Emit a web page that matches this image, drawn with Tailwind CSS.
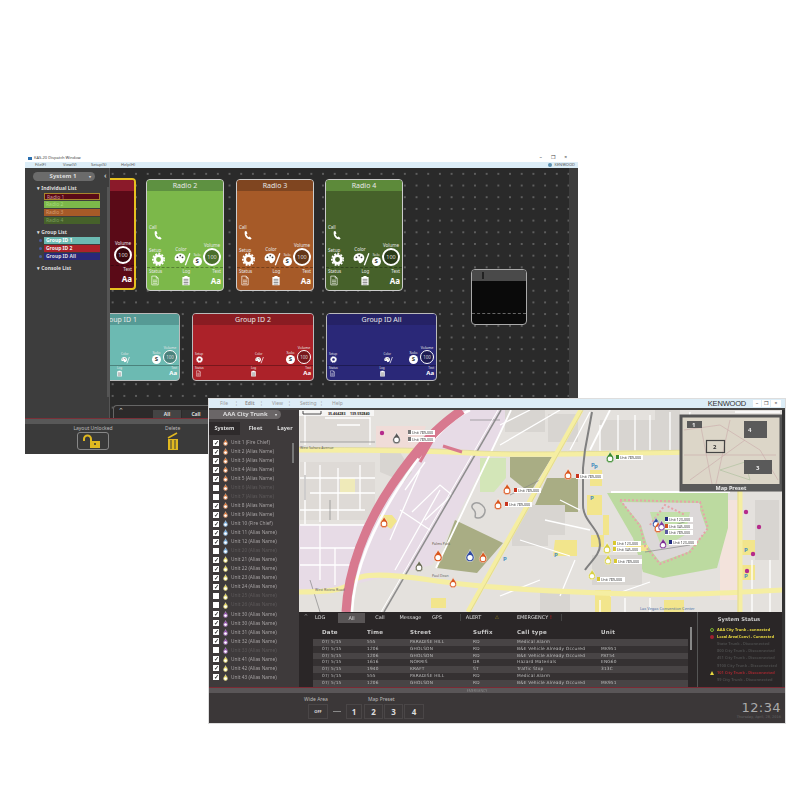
<!DOCTYPE html>
<html lang="en">
<head>
    <meta charset="UTF-8">
    <meta name="viewport" content="width=device-width, initial-scale=1.0">
    <title>Kenwood Dispatch</title>
    <script src="https://cdn.jsdelivr.net/npm/@tailwindcss/browser@4"></script>
</head>
<body class="bg-white">
    <!-- shared icons -->
    <svg class="hidden">
        <symbol id="phone" viewBox="0 0 24 24"><path fill="currentColor" d="M5 2 9 1l3 7-3 2c1 3 3 6 6 8l3-2 5 5-3 3C10 24 2 13 5 2z"/></symbol>
        <symbol id="gear" viewBox="0 0 24 24"><circle cx="12" cy="12" r="7" fill="none" stroke="currentColor" stroke-width="5"/><circle cx="12" cy="12" r="10.5" fill="none" stroke="currentColor" stroke-width="3" stroke-dasharray="3.5 2.5"/></symbol>
        <symbol id="palette" viewBox="0 0 30 24"><path fill="currentColor" d="M11 2C5 2 1 6 1 11c0 4 3 5 5 4 2-1 4 0 4 2 0 2 2 3 4 2 4-2 6-5 6-9 0-5-4-8-9-8z"/><circle cx="6" cy="9" r="1.6" fill="#444"/><circle cx="11" cy="6" r="1.6" fill="#444"/><circle cx="15" cy="9" r="1.6" fill="#444"/><path stroke="currentColor" stroke-width="2.4" d="M28 2 20 23"/></symbol>
        <symbol id="doc" viewBox="0 0 20 24"><path fill="none" stroke="currentColor" stroke-width="1.8" d="M2 1h11l5 5v17H2zM13 1v5h5M5 11h10M5 15h10M5 19h10"/></symbol>
        <symbol id="clip" viewBox="0 0 20 24"><path fill="currentColor" d="M1 3h5V1h8v2h5v21H1z"/><path stroke="#555" stroke-width="1.6" d="M4 9h12M4 13h12M4 17h12M4 21h12"/></symbol>
        <symbol id="drop" viewBox="0 0 12 16"><path fill="currentColor" stroke="#fff" stroke-width=".6" d="M6 .5C7 4 11 6 11 10.500a5 5 0 0 1-10 0C1 7 5 5 6 .5z"/><circle cx="6" cy="10.500" r="3.200" fill="#fff"/></symbol>
    </svg>

    <div class="relative w-[800px] h-[800px] overflow-hidden blur-[0.55px] font-['Noto_Sans',sans-serif]">

        <!-- back window: layout editor -->
        <div class="absolute left-[25px] top-[154px] w-[553px] h-[300px] flex flex-col bg-[#3a3a3a]">
            <div class="h-2 bg-white flex items-center justify-between pl-[3px] pr-[11px] text-[4px] text-[#444]">
                <span class="flex items-center gap-[2px]"><span class="w-[4px] h-[3px] bg-[#2a6fb0]"></span>KAS-20 Dispatch Window</span>
                <span class="flex gap-[9px] text-[5px]"><span>–</span><span>❐</span><span>×</span></span>
            </div>
            <div class="h-[6px] bg-[#dcedf7] flex items-center justify-between pl-[10px] pr-[3px] text-[4px] text-[#555]">
                <span class="flex"><span class="w-[28px]">File(F)</span><span class="w-[28px]">View(V)</span><span class="w-[30px]">Setup(S)</span><span>Help(H)</span></span>
                <span class="flex items-center gap-[2px]"><span class="w-[4px] h-[4px] rounded-full bg-[#5b8fb0]"></span>KENWOOD</span>
            </div>
            <div class="relative h-[250px] flex">
                <div class="relative flex-1 overflow-hidden bg-[#2a2a2a] bg-[radial-gradient(circle,#5e5e5e_0.8px,transparent_1.1px)] bg-[length:11.7px_11.7px]" id="canvas">
                    <div class="absolute left-[88px] top-[237px] w-[440px] h-[13px] border-t border-l border-[#666] rounded-tl-[4px] bg-[#2c2a2a] flex items-end pl-[39px]">
                        <span class="absolute left-[4px] top-[1px] text-[7px] leading-[7px] text-[#ccc]">⌃</span>
                        <span class="w-[28px] h-[8px] bg-[#444] text-[5px] leading-[8px] text-center text-[#ddd] font-bold">All</span>
                        <span class="ml-[1px] w-[28px] h-[8px] bg-[#333] text-[5px] leading-[8px] text-center text-[#ddd] font-bold">Call</span>
                    </div>
                </div>
                <div class="w-[9px] bg-[#3d3d3d]"></div>

                <!-- left list, lies over the canvas -->
                <div class="absolute left-0 top-0 bottom-0 w-[85px] bg-[#3d3d3d] border-r border-[#555] text-[5px] font-bold text-[#ddd]">
                    <div class="flex items-center mt-[4px] ml-2 w-[62px] h-[9px] rounded-full bg-[#6b6b6b] px-[4px] justify-between text-[6px]">
                        <span class="flex-1 text-center">System 1</span><span class="text-[4px]">▾</span>
                    </div>
                    <span class="absolute left-[79px] top-[4px] text-[7px] leading-[8px] text-[#ccc]">‹</span>
                    <div class="absolute left-[82px] top-[19px] w-[3px] h-[210px] bg-[#555]"></div>
                    <div class="ml-[12px] mt-[4px] leading-[7px]">▾ Individual List</div>
                    <div class="ml-[19px] mt-[1px] w-[56px] flex flex-col gap-[1px] font-normal">
                        <div class="h-[7px] pl-[2px] leading-[6px] bg-[#5a0a17] border border-[#a8862c] text-[#c99]">Radio 1</div>
                        <div class="h-[7px] pl-[2px] leading-[7px] bg-[#7cb84a] text-[#a5d97a]">Radio 2</div>
                        <div class="h-[7px] pl-[2px] leading-[7px] bg-[#a65a28] text-[#d49a70]">Radio 3</div>
                        <div class="h-[7px] pl-[2px] leading-[7px] bg-[#46612a] text-[#7b9a5c]">Radio 4</div>
                    </div>
                    <div class="ml-[12px] mt-[5px] leading-[7px]">▾ Group List</div>
                    <div class="ml-[19px] mt-[1px] w-[56px] flex flex-col gap-[1px]">
                        <div class="relative h-[7px] pl-[2px] leading-[7px] bg-[#6cbab2] text-white">Group ID 1<span class="absolute -left-[5px] top-[2px] w-[3px] h-[3px] rounded-full bg-[#4a5a9a]"></span></div>
                        <div class="relative h-[7px] pl-[2px] leading-[7px] bg-[#ac2229] text-[#eee]">Group ID 2<span class="absolute -left-[5px] top-[2px] w-[3px] h-[3px] rounded-full bg-[#4a5a9a]"></span></div>
                        <div class="relative h-[7px] pl-[2px] leading-[7px] bg-[#2a2878] text-[#ddd]">Group ID All<span class="absolute -left-[5px] top-[2px] w-[3px] h-[3px] rounded-full bg-[#4a5a9a]"></span></div>
                    </div>
                    <div class="ml-[12px] mt-[5px] leading-[7px]">▾ Console List</div>
                </div>
            </div>
            <div class="h-[6px] bg-[#585858] border-t border-[#7a3038]"></div>
            <div class="h-[30px] bg-[#3a3a3a] relative text-[5px] text-[#bbb] flex">
                <div class="ml-[51px] w-[34px] flex flex-col items-center pt-[1px]">
                    <span class="leading-[6px] whitespace-nowrap">Layout Unlocked</span>
                    <div class="mt-[1px] w-[32px] h-[18px] rounded-[3px] border border-[#888] flex items-center justify-center">
                        <svg width="22" height="14" viewBox="0 0 22 14"><path fill="none" stroke="#e0b820" stroke-width="2" d="M2 7V5a3.500 3.500 0 0 1 7 0v2"/><path fill="#e0b820" d="M8 7h10v7H8z"/><circle cx="13" cy="10" r="1" fill="#333"/></svg>
                    </div>
                </div>
                <div class="ml-[55px] flex flex-col items-center pt-[1px]">
                    <span class="leading-[6px]">Delete</span>
                    <svg class="mt-[1px]" width="12" height="18" viewBox="0 0 12 18"><path stroke="#e0b820" stroke-width="1.500" d="M1 6 10 1"/><path fill="#e0b820" d="M1 7h10v11H1z"/><path stroke="#3a3a3a" d="M4 8v9M8 8v9"/></svg>
                </div>
            </div>
        </div>

        <!-- front window: map dispatch -->
        <div class="absolute left-[209px] top-[399px] w-[576px] h-[324px] flex flex-col bg-[#2a2627] text-[#bbb] shadow-[0_0_0_1px_#ddd]">
            <div class="h-[11px] bg-[#dcedf7] border-b-2 border-[#444] flex items-center text-[5px] text-[#999]">
                <span class="ml-[11px] w-[15px]">File</span><span class="w-[10px]">¦</span><span class="w-[15px] font-bold">Edit</span><span class="w-[12px]">¦</span><span class="w-[16px]">View</span><span class="w-[12px]">¦</span><span class="w-[20px]">Setting</span><span class="w-[12px]">¦</span><span>Help</span>
                <span class="ml-auto mr-[7px] text-[7.500px] tracking-[-0.2px] text-[#333] font-['Liberation_Sans',sans-serif]">KENWOOD</span>
                <span class="flex gap-[1px] mr-[4px] text-[5px] text-[#444]"><span class="w-[8px] text-center bg-white">–</span><span class="w-[8px] text-center bg-white">❐</span><span class="w-[10px] text-center bg-white">×</span></span>
            </div>
            <div class="flex h-[202px]">
                <div class="w-[90px] shrink-0 bg-[#3e3a3b]"></div>
                <svg class="block shrink-0" width="483" height="202" viewBox="299 410 483 202" font-family="Noto Sans, sans-serif">
                    <rect x="299" y="410" width="483" height="202" fill="#e4e1dd"/>
                    <!-- land use -->
                    <path fill="#e7dbe6" d="M299 525H368L350 590 299 592zM462 410H512L432 565 352 585 360 530 392 485z"/>
                    <path fill="#f0dcd8" d="M376 426h50l-8 22h-42z"/>
                    <path fill="#f3e3dc" d="M720 500h18v100h-18z"/>
                    <path fill="#d3e6b8" d="M480 458h26v20l-12 14h-14z"/>
                    <path fill="#a9ad84" d="M437 568 455 520 503 543 477 573zM510 457H552L530 493 510 477zM547 478H578V512H532z"/>
                    <path fill="#bcdaa0" d="M607 493H728V528L717 568 663 578 643 572 633 538z"/>
                    <path fill="#dcd8d8" d="M622 502 700 503 700 510 707 530 688 552 660 562 647 545 641 525z"/>
                    <path fill="#c3dfaa" d="M650 512 690 512 685 535 662 548 655 530z"/>
                    <path fill="#f2e58c" d="M380 515h12l5 6-6 8-12-8zM555 540h22v16h-24zM590 470h12v16h-12zM587 495h15v20h-15zM591 535h13v12h-13zM603 515h6v20h-6zM626 545h22v6h-22zM431 598h15v10h-15zM595 590h16v22h-16zM664 600h20v12h-20zM742 540h13v15h-13zM742 565h13v15h-13z"/>
                    <path fill="#d8d5d1" d="M380 452h20l12 20-8 10-24-10zM525 505h40v30h-55zM592 555h50v30h-50zM655 410h25v40h-25zM548 414h30v28h-30zM505 410h40v22h-40zM512 530h36v16h-36zM540 590h30v22h-30zM755 500h24v60h-24zM600 420h60v30h-60z"/>
                    <path fill="#dedad6" d="M300 462h75v58h-75zM300 412h70v30h-70z"/>
                    <path fill="#efeab9" d="M340 478h15v16h-15z"/>
                    <!-- minor streets -->
                    <g fill="none" stroke="#fff" stroke-width="1.300">
                        <path d="M305 412V445M325 418H370V445M337 425H360M305 462V524M320 465V522M338 468V520M360 465V510M300 478H375M310 493H375M300 510H365M300 525H372M300 548H360M320 525V580M335 548V585M300 565H355"/>
                        <path d="M405 490 425 462M412 512 440 485 452 495 425 520M400 510 430 530M390 540 420 470M395 570 440 490"/>
                        <path d="M500 425 530 410M500 445 560 410M590 412 570 450M600 425V452M618 415V452M635 415V452M650 415V452M670 412V450M690 412 685 450M545 520 590 530M560 500 580 510M520 540 570 556M500 596 540 580M560 596 575 560M610 596 650 582M735 412H780M735 440H780M752 560V612M770 560V612M600 600V612M625 598V612M650 598V612"/>
                        <path stroke-width="1.800" d="M611 492H730M511 410 436 568M610 410 590 450"/>
                    </g>
                    <path fill="none" stroke="#e6a3a8" stroke-width="2" stroke-dasharray="2 2" d="M620 500 700 502 708 528 690 552 660 564 645 546 640 526zM650 525 665 505 685 515"/>
                    <path fill="none" stroke="#888" stroke-width=".7" d="M300 442H375M305 475V500M330 500V520M395 480 420 445M470 420 500 420M540 480 510 495M310 580 320 612M690 520 660 530M645 552 690 545"/>
                    <!-- rail, highway, main roads -->
                    <path fill="none" stroke="#8d8d8d" stroke-width="1.500" d="M501 410 384 612"/>
                    <path fill="none" stroke="#fff" stroke-width="1" d="M498 410 381 612"/>
                    <path fill="none" stroke="#f5eea2" stroke-width="5" d="M299 450C360 450 420 450 470 453S600 453 782 451"/>
                    <path fill="none" stroke="#dcd58a" stroke-width=".6" d="M299 447.500C360 447.500 420 447.500 470 450.500S600 451 782 449"/>
                    <path fill="none" stroke="#f5eea2" stroke-width="5" d="M299 592C330 592 345 590 352 582 360 572 390 574 430 580S520 590 600 593 700 594 782 590M581 410 468 612M740 490V612"/>
                    <path fill="none" stroke="#d6cf80" stroke-width=".6" d="M583 410 470 612M738 490V612"/>
                    <path fill="none" stroke="#fff" stroke-width="2.500" d="M352 612C354 570 372 530 397 490S447 420 470 410"/>
                    <path fill="none" stroke="#d8798f" stroke-width="9" d="M346 612C348 570 365 525 392 485S440 425 462 410"/>
                    <path fill="none" stroke="#d8798f" stroke-width="3" d="M443 446 462 452M418 458 435 436 420 462"/>
                    <path fill="none" stroke="#808080" stroke-width="2" d="M592 412 585 450 583 468V505C583 522 600 528 600 545 600 555 590 562 585 570"/>
                    <path fill="none" stroke="#a0a0a0" stroke-width="1.500" d="M474 510C468 505 476 500 482 505 488 510 484 518 478 518 472 518 478 514 474 510z"/>
                    <!-- parking and pois -->
                    <g fill="#4a90c0" font-size="6" font-weight="700"><text x="591" y="467">P</text><text x="590" y="500">P</text><text x="503" y="561">P</text><text x="554" y="557">P</text><text x="594" y="469">P</text><text x="744" y="552">P</text><text x="744" y="578">P</text></g>
                    <g fill="#b52a8c"><circle cx="382" cy="433" r="2.200"/><circle cx="746" cy="512" r="2.200"/><circle cx="759" cy="527" r="2.200"/><circle cx="753" cy="554" r="2.200"/><circle cx="747" cy="571" r="2.200"/></g>
                    <!-- street names -->
                    <g fill="#666" font-size="3.500">
                        <text x="300" y="449">West Sahara Avenue</text><text x="315" y="591">West Riviera Road</text><text x="432" y="577">Paul Dean</text><text x="432" y="545" fill="#5f6048">Palms Park</text><text x="640" y="610" fill="#4a6fa8" font-size="4">Las Vegas Convention Center</text>
                    </g>
                    <!-- scale and coordinates -->
                    <rect x="299" y="410" width="75" height="6" fill="#fff" fill-opacity=".7"/>
                    <path fill="none" stroke="#222" stroke-width=".8" d="M303 411v3h18v-3"/>
                    <text x="328" y="415" font-size="3.600" font-weight="700" fill="#222">35.464283</text><text x="350" y="415" font-size="3.600" font-weight="700" fill="#222">139.592840</text>
                    <!-- units -->
                    <g>
                        <use href="#drop" x="379" y="516" width="10" height="12" color="#d9561e"/>
                        <use href="#drop" x="433" y="549" width="10" height="13" color="#d9561e"/>
                        <use href="#drop" x="465" y="549" width="10" height="13" color="#2f4aa0"/>
                        <use href="#drop" x="478" y="551" width="10" height="12" color="#d9561e"/>
                        <use href="#drop" x="414" y="560" width="10" height="12" color="#6b6b55"/>
                        <use href="#drop" x="448" y="577" width="10" height="11" color="#d9561e"/>
                        <use href="#drop" x="502" y="483" width="10" height="12" color="#d9561e"/>
                        <use href="#drop" x="493" y="498" width="10" height="12" color="#d9561e"/>
                        <use href="#drop" x="563" y="468" width="10" height="12" color="#d9561e"/>
                        <use href="#drop" x="605" y="451" width="10" height="12" color="#3c8a2e"/>
                        <use href="#drop" x="651" y="517" width="10" height="11" color="#2f4aa0"/>
                        <use href="#drop" x="653" y="521" width="10" height="12" color="#d9561e"/>
                        <use href="#drop" x="657" y="520" width="9" height="11" color="#7a3fa0"/>
                        <use href="#drop" x="658" y="538" width="10" height="11" color="#7a2a90"/>
                        <use href="#drop" x="602" y="542" width="10" height="12" color="#d8d040"/>
                        <use href="#drop" x="603" y="554" width="10" height="11" color="#d8d040"/>
                        <use href="#drop" x="587" y="569" width="10" height="11" color="#d8d040"/>
                        <use href="#drop" x="392" y="432" width="9" height="12" color="#555"/>
                    </g>
                    <g font-size="3.500" fill="#333">
                        <rect x="408" y="430" width="27" height="5" fill="#fff"/><rect x="408" y="437" width="27" height="5" fill="#fff"/><rect x="408" y="430" width="3" height="4" fill="#777"/><rect x="408" y="437" width="3" height="4" fill="#777"/><text x="412" y="434">Unit 789-000</text><text x="412" y="441">Unit 789-000</text>
                        <rect x="514" y="488" width="27" height="5" fill="#fff"/><rect x="514" y="488" width="3" height="4" fill="#c8351e"/><text x="518" y="492">Unit 789-000</text>
                        <rect x="505" y="502" width="27" height="5" fill="#fff"/><rect x="505" y="502" width="3" height="4" fill="#c8351e"/><text x="509" y="506">Unit 789-000</text>
                        <rect x="576" y="474" width="27" height="5" fill="#fff"/><rect x="576" y="474" width="3" height="4" fill="#c8351e"/><text x="580" y="478">Unit 789-000</text>
                        <rect x="616" y="455" width="27" height="5" fill="#fff"/><rect x="616" y="455" width="3" height="4" fill="#3c8a2e"/><text x="620" y="459">Unit 789-000</text>
                        <rect x="665" y="517" width="28" height="5" fill="#fff"/><rect x="665" y="517" width="3" height="4" fill="#1f2a80"/><text x="669" y="521">Unit 123-000</text>
                        <rect x="665" y="524" width="28" height="5" fill="#fff"/><rect x="665" y="524" width="3" height="4" fill="#d0501e"/><text x="669" y="528">Unit 345-000</text>
                        <rect x="665" y="530" width="28" height="5" fill="#fff"/><rect x="665" y="530" width="3" height="4" fill="#5a5aa0"/><text x="669" y="534">Unit 789-000</text>
                        <rect x="669" y="540" width="28" height="5" fill="#fff"/><rect x="669" y="540" width="3" height="4" fill="#1f2a80"/><text x="673" y="544">Unit 123-000</text>
                        <rect x="613" y="541" width="28" height="5" fill="#fff"/><rect x="613" y="541" width="3" height="4" fill="#d8c830"/><text x="617" y="545">Unit 123-000</text>
                        <rect x="613" y="547" width="28" height="5" fill="#fff"/><rect x="613" y="547" width="3" height="4" fill="#d8c830"/><text x="617" y="551">Unit 345-000</text>
                        <rect x="614" y="559" width="28" height="5" fill="#fff"/><rect x="614" y="559" width="3" height="4" fill="#d8c830"/><text x="618" y="563">Unit 789-000</text>
                        <rect x="597" y="577" width="28" height="5" fill="#fff"/><rect x="597" y="577" width="3" height="4" fill="#d8c830"/><text x="601" y="581">Unit 789-000</text>
                    </g>
                    <!-- map preset overview -->
                    <rect x="681" y="416" width="100" height="75" fill="#dcd6c8"/>
                    <g fill="none" stroke="#c9a9a9" stroke-width=".6"><path d="M684 430 720 425 760 450 778 480M700 422 712 484M684 455H776M730 420 716 484M745 440 690 480"/><path stroke="#a9c09a" d="M720 470 745 462 750 480z"/></g>
                    <path fill="none" stroke="#555" stroke-width="3" d="M681 416H781V490H681z"/>
                    <rect x="681" y="484" width="100" height="7" fill="#5a5a5a"/>
                    <text x="731" y="489.500" text-anchor="middle" font-size="5.500" font-weight="700" fill="#eee">Map Preset</text>
                    <rect x="687" y="421" width="15" height="7" fill="#5a5a5a"/><text x="692" y="427" font-size="6" font-weight="700" fill="#eee">1</text>
                    <rect x="744" y="421" width="23" height="17" fill="#5a5a5a"/><text x="748" y="432" font-size="6" font-weight="700" fill="#eee">4</text>
                    <rect x="706.500" y="440.500" width="18" height="12" fill="none" stroke="#444" stroke-width="1.200"/><text x="713" y="449" font-size="6" font-weight="700" fill="#333">2</text>
                    <rect x="744" y="460" width="28" height="14" fill="#5a5a5a"/><text x="756" y="470" font-size="6" font-weight="700" fill="#eee">3</text>
                </svg>
                <div class="w-[3px] bg-[#333]"></div>
            </div>
            <div class="flex h-[75px]">
                <div class="w-[90px] shrink-0 bg-[#3e3a3b]"></div>
                <!-- log table -->
                <div class="w-[398px] shrink-0 relative font-['DejaVu_Sans',sans-serif]">
                    <div class="h-[11px] flex items-center text-[5px] text-[#ddd]">
                        <span class="ml-[4px] w-[12px] text-[7px] leading-[7px] text-[#888]">⌃</span>
                        <span class="w-[23px]">LOG</span>
                        <span class="w-[27px] h-[10px] leading-[10px] text-center bg-[#595556]">All</span>
                        <span class="w-[30px] text-center">Call</span>
                        <span class="w-[31px] text-center">Message</span>
                        <span class="w-[22px] text-center">GPS</span>
                        <span class="ml-[12px] w-[26px] text-center border-l border-[#444]">ALERT</span>
                        <span class="w-[22px] text-center text-[#8a7a20]">⚠</span>
                        <span class="w-[54px] text-center border-r border-[#444]">EMERGENCY <b class="text-[#a02020]">!</b></span>
                    </div>
                    <div class="ml-[14px] w-[375px] pt-[3px]">
                        <div class="grid grid-cols-[45px_43px_63px_44px_84px_1fr] h-[13px] items-center pl-[9px] text-[5.500px] font-bold tracking-[0.3px] text-[#ccc]">
                            <span>Date</span><span>Time</span><span>Street</span><span>Suffix</span><span>Call type</span><span>Unit</span>
                        </div>
                        <div id="logRows"></div>
                    </div>
                    <div class="absolute right-[5px] top-[15px] w-[2px] h-[23px] bg-[#888]"></div>
                </div>
                <!-- system status -->
                <div class="flex-1 border-l border-[#555] pl-[12px] text-[3.950px] font-bold">
                    <div class="h-[15px] leading-[15px] text-center pr-[14px] text-[5.200px] text-[#ccc] font-['DejaVu_Sans',sans-serif]">System Status</div>
                    <div id="statusRows" class="-mt-[1px]"></div>
                </div>
                <div class="w-[3px] bg-[#333]"></div>
            </div>
            <div class="h-[6px] bg-[#5a5658] border-t border-[#7a2a34] text-[3.500px] leading-[5px] text-[#888] text-center pr-[40px]">EMERGENCY</div>
            <div class="flex-1 bg-[#3b3738] relative flex items-start text-[5px] text-[#bbb]">
                <div class="ml-[99px] mt-[2px] flex flex-col">
                    <div class="flex leading-[8px] -ml-[4px]"><span class="w-[64px]">Wide Area</span><span>Map Preset</span></div>
                    <div class="flex items-center mt-[1px] font-bold text-[#ddd]">
                        <span class="w-[20px] h-[15px] leading-[14px] text-center text-[4px] border border-[#4a4647]">OFF</span>
                        <span class="w-[16px] h-px bg-[#888] mx-[1px] scale-x-50"></span>
                        <span class="w-[16px] h-[15px] leading-[13px] text-center text-[8px] border border-[#4a4647]">1</span>
                        <span class="ml-[2px] w-[19px] h-[15px] leading-[13px] text-center text-[8px] border border-[#4a4647]">2</span>
                        <span class="ml-[1px] w-[19px] h-[15px] leading-[13px] text-center text-[8px] border border-[#4a4647]">3</span>
                        <span class="ml-[1px] w-[20px] h-[15px] leading-[13px] text-center text-[8px] border border-[#4a4647]">4</span>
                    </div>
                </div>
                <div class="ml-auto mr-[4px] mt-[7px] flex flex-col items-end font-['DejaVu_Sans',sans-serif]">
                    <span class="text-[13px] leading-[15px] tracking-[0.4px] text-[#aaa]">12:34</span>
                    <span class="text-[3.500px] leading-[5px] text-[#666]">Thursday, April, 28, 2016</span>
                </div>
            </div>

            <!-- unit list over the left column -->
            <div class="absolute left-0 top-[11px] w-[90px] h-[277px] text-[4.800px]">
                <div class="h-[9px] w-[72px] rounded-r-full bg-[#6a6667] flex items-center justify-between pl-[14px] pr-[4px] text-[6px] font-bold text-[#ddd]"><span>AAA City Trunk</span><span class="text-[4px]">▾</span></div>
                <div class="flex mt-[3px] h-[13px] items-center text-[5.500px] font-bold text-[#ddd]">
                    <span class="w-[31px] h-full leading-[13px] text-center bg-[#2e2a2b]">System</span>
                    <span class="w-[31px] text-center">Fleet</span>
                    <span class="w-[28px] text-center">Layer</span>
                </div>
                <div id="unitRows" class="mt-[3px] ml-[4px]"></div>
                <div class="absolute left-[83px] top-[33px] w-[2px] h-[20px] bg-[#777]"></div>
            </div>
        </div>
    </div>

    <script>
        // hidden = class for the parts of the card that the left list covers
        function radioCard(pos, name, body, head, extra, hidden) {
            return `
                <div class="absolute ${pos} w-[78px] h-[112px] rounded-[4px] border ${extra} flex flex-col overflow-hidden text-[#e8e8e8] ${body}">
                    <div class="h-[11px] shrink-0 text-center text-[7px] leading-[11px] ${head}"><span class="${hidden}">${name}</span></div>
                    <div class="flex-1 flex flex-col justify-end px-[2px] text-[4.500px] leading-[6px]">
                        <span class="${hidden}">Call</span>
                        <svg class="w-[9px] h-[10px] ml-[4px] mb-[1px] text-white ${hidden}"><use href="#phone"/></svg>
                        <div class="flex items-end justify-between mt-[1px]">
                            <div class="flex flex-col ${hidden}"><span>Setup</span><svg class="w-[13px] h-[13px] ml-[3px] text-white"><use href="#gear"/></svg></div>
                            <div class="flex flex-col ml-[8px] ${hidden}"><span class="ml-[1px]">Color</span><svg class="w-[17px] h-[14px] text-white"><use href="#palette"/></svg></div>
                            <div class="flex flex-col items-center ${hidden}"><span class="text-[3.500px] leading-[4px]">Solo</span><span class="w-[9px] h-[9px] rounded-full bg-white text-[#333] text-[6px] leading-[9px] text-center font-bold">S</span></div>
                            <div class="flex flex-col items-center"><span>Volume</span><span class="w-[18px] h-[18px] rounded-full border-2 border-white text-[5.500px] leading-[14px] text-center text-[#ddd] bg-black/40">100</span></div>
                        </div>
                    </div>
                    <div class="h-[23px] shrink-0 border-t border-dashed border-black/30 mt-[1px] flex justify-between px-[2px] text-[4.500px] leading-[7px]">
                        <div class="flex flex-col ${hidden}"><span>Status</span><svg class="w-[8px] h-[11px] ml-[2px] text-white/90"><use href="#doc"/></svg></div>
                        <div class="flex flex-col items-center ${hidden}"><span>Log</span><svg class="w-[8px] h-[11px] text-white"><use href="#clip"/></svg></div>
                        <div class="flex flex-col items-end"><span>Text</span><span class="text-[8px] leading-[11px] font-bold text-white">Aa</span></div>
                    </div>
                </div>`;
        }

        function groupCard(pos, width, name, body, head) {
            return `
                <div class="absolute ${pos} ${width} h-[68px] rounded-[4px] border border-[#bbb] flex flex-col overflow-hidden text-[#e8e8e8] ${body}">
                    <div class="h-[11px] shrink-0 text-center text-[7px] leading-[11px] ${head}">${name}</div>
                    <div class="flex-1 flex items-end justify-between px-[2px] text-[3px] leading-[4px]">
                        <div class="flex flex-col"><span>Setup</span><svg class="w-[7px] h-[7px] ml-[1px] mb-[1px] text-white"><use href="#gear"/></svg></div>
                        <div class="flex flex-col ml-[30px]"><span>Color</span><svg class="w-[9px] h-[8px] text-white"><use href="#palette"/></svg></div>
                        <div class="flex items-end gap-[2px]">
                            <div class="flex flex-col items-center"><span class="text-[4px]">Solo</span><span class="w-[9px] h-[9px] rounded-full bg-white text-[#333] text-[6px] leading-[9px] text-center font-bold">S</span></div>
                            <div class="flex flex-col items-center"><span class="text-[3.500px]">Volume</span><span class="w-[14px] h-[14px] rounded-full border border-white text-[4.500px] leading-[12px] text-center text-[#ddd] bg-black/30">100</span></div>
                        </div>
                    </div>
                    <div class="h-[15px] shrink-0 border-t border-black/30 mt-[1px] flex justify-between px-[2px] text-[3px] leading-[4px]">
                        <div class="flex flex-col"><span>Status</span><svg class="w-[5px] h-[7px] ml-[1px] text-white/90"><use href="#doc"/></svg></div>
                        <div class="flex flex-col items-center"><span>Log</span><svg class="w-[5px] h-[7px] text-white"><use href="#clip"/></svg></div>
                        <div class="flex flex-col items-end"><span>Text</span><span class="text-[6px] leading-[7px] font-bold text-white">Aa</span></div>
                    </div>
                </div>`;
        }

        const cards = [
            radioCard('left-[33px] top-[10px]', 'Radio 1', 'bg-[#5a0a17]', 'bg-[#8b1a2a]', 'border-2 border-[#e6c020]', 'invisible'),
            radioCard('left-[121px] top-[11px]', 'Radio 2', 'bg-[#7cb84a]', 'bg-[#5e9141]', 'border-[#ccc]', ''),
            radioCard('left-[211px] top-[11px]', 'Radio 3', 'bg-[#a65a28]', 'bg-[#7f4520]', 'border-[#ccc]', ''),
            radioCard('left-[300px] top-[11px]', 'Radio 4', 'bg-[#46612a]', 'bg-[#5d8a3a]', 'border-[#ccc]', ''),
            groupCard('left-[33px] top-[145px]', 'w-[122px]', 'Group ID 1', 'bg-[#6cbab2]', 'bg-[#569a95]'),
            groupCard('left-[167px] top-[145px]', 'w-[122px]', 'Group ID 2', 'bg-[#ac2229]', 'bg-[#8a1c22]'),
            groupCard('left-[301px] top-[145px]', 'w-[111px]', 'Group ID All', 'bg-[#2a2878]', 'bg-[#252266]'),
            `<div class="absolute left-[446px] top-[101px] w-[56px] h-[56px] rounded-[4px] border border-[#aaa] bg-[#0a0a0a] flex flex-col overflow-hidden">
                <div class="h-[11px] bg-[#4a4a4a] pl-[10px]"><div class="w-[2px] h-[7px] mt-[2px] bg-[#222]"></div></div>
                <div class="flex-1"></div>
                <div class="h-[11px] border-t border-dashed border-[#666]"></div>
            </div>`
        ];
        document.getElementById('canvas').insertAdjacentHTML('afterbegin', cards.join(''));

        const logs = [
            ['07/ 5/15', '555', 'PARADISE HILL', 'RD', 'Medical Alarm', ''],
            ['07/ 5/15', '1206', 'GHOLSON', 'RD', 'B&E Vehicle Already Occured', 'MK951'],
            ['07/ 5/15', '1206', 'GHOLSON', 'RD', 'B&E Vehicle Already Occured', 'PAT54'],
            ['07/ 5/15', '1616', 'NORRIS', 'DR', 'Hazard Materials', 'ENG60'],
            ['07/ 5/15', '1940', 'KRAFT', 'ST', 'Traffic Stop', '313C'],
            ['07/ 5/15', '555', 'PARADISE HILL', 'RD', 'Medical Alarm', ''],
            ['07/ 5/15', '1206', 'GHOLSON', 'RD', 'B&E Vehicle Already Occured', 'MK951']
        ];
        document.getElementById('logRows').innerHTML = logs.map((row, i) => `
            <div class="grid grid-cols-[45px_43px_63px_44px_84px_1fr] h-[6.800px] items-center pl-[9px] text-[4.300px] leading-[6.800px] tracking-[0.2px] text-[#bbb] whitespace-nowrap ${i % 2 ? 'bg-[#353132]' : 'bg-[#484445]'}">
                ${row.map(c => `<span>${c}</span>`).join('')}
            </div>`).join('');

        const status = [
            ['AAA City Trunk - connected', 'text-[#e8d840]', 'ok'],
            ['Local Area(Conv) - Connected', 'text-[#e8d840]', 'err'],
            ['State Trunk - Disconnected', 'text-[#4a4a4a]', ''],
            ['800 City Trunk - Disconnected', 'text-[#4a4a4a]', ''],
            ['451 City Trunk - Disconnected', 'text-[#4a4a4a]', ''],
            ['9100 City Trunk - Disconnected', 'text-[#4a4a4a]', ''],
            ['101 City Trunk - Disconnected', 'text-[#a02830]', 'warn'],
            ['99 City Trunk - Disconnected', 'text-[#4a4a4a]', '']
        ];
        const marks = {
            ok: '<span class="block w-[4px] h-[4px] rounded-full border border-[#7ab030]"></span>',
            err: '<span class="block w-[4px] h-[4px] rounded-full bg-[#a02030]"></span>',
            warn: '<span class="block w-0 h-0 border-x-[2.500px] border-x-transparent border-b-[4px] border-b-[#e8d840]"></span>',
            '': ''
        };
        document.getElementById('statusRows').innerHTML = status.map(([text, color, mark]) => `
            <div class="flex items-center h-[7.200px] whitespace-nowrap ${color}">
                <span class="w-[6px] shrink-0">${marks[mark]}</span><span class="ml-[1px]">${text}</span>
            </div>`).join('');

        const units = [
            ['1', 'Fire Chief', 1, 'o'], ['2', 'Alias Name', 1, 'o'], ['3', 'Alias Name', 1, 'o'], ['4', 'Alias Name', 1, 'o'],
            ['5', 'Alias Name', 1, 'o'], ['6', 'Alias Name', 0, 'o'], ['7', 'Alias Name', 0, 'o'], ['8', 'Alias Name', 1, 'o'],
            ['9', 'Alias Name', 1, 'o'], ['10', 'Fire Chief', 1, 'b'], ['11', 'Alias Name', 1, 'b'], ['12', 'Alias Name', 1, 'b'],
            ['20', 'Alias Name', 0, 'b'], ['21', 'Alias Name', 1, 'y'], ['22', 'Alias Name', 1, 'y'], ['23', 'Alias Name', 1, 'y'],
            ['24', 'Alias Name', 1, 'y'], ['25', 'Alias Name', 0, 'y'], ['26', 'Alias Name', 0, 'y'], ['30', 'Alias Name', 1, 'p'],
            ['30', 'Alias Name', 1, 'p'], ['31', 'Alias Name', 1, 'p'], ['32', 'Alias Name', 1, 'p'], ['33', 'Alias Name', 0, 'p'],
            ['41', 'Alias Name', 1, 'y'], ['42', 'Alias Name', 1, 'y'], ['43', 'Alias Name', 1, 'y']
        ];
        const unitColors = { o: 'text-[#e0702a]', b: 'text-[#6aa8e0]', y: 'text-[#e6d850]', p: 'text-[#9040b0]' };
        document.getElementById('unitRows').innerHTML = units.map(([no, alias, on, c]) => `
            <div class="flex items-center h-[9.040px] whitespace-nowrap ${on ? 'text-[#a5a1a2]' : 'text-[#5e5a5b]'}">
                <span class="w-[6px] h-[6px] shrink-0 bg-white text-[#333] text-[6px] leading-[6px] font-bold text-center">${on ? '✓' : ''}</span>
                <svg class="w-[5px] h-[7px] ml-[4px] ${unitColors[c]}"><use href="#drop"/></svg>
                <span class="ml-[3px]">Unit ${no} (${alias})</span>
            </div>`).join('');
    </script>
</body>
</html>
